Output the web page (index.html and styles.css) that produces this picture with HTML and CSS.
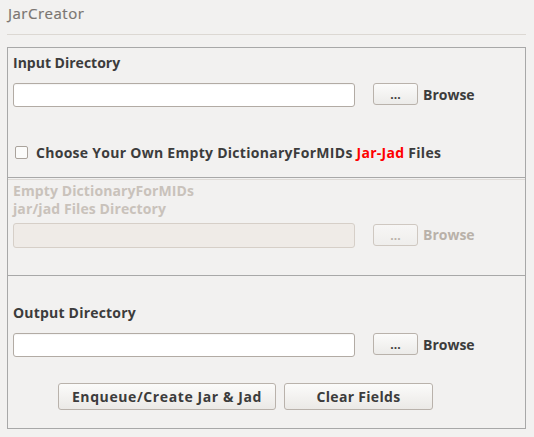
FILE: index.html
```html
<!DOCTYPE html>
<html>
<head>
<meta charset="utf-8">
<link rel="stylesheet" href="styles.css">
</head>
<body>
<div class="app">
  <div class="title">JarCreator</div>
  <div class="sep"></div>
  <div class="panel">
    <section class="sec sec-a">
      <div class="label label-a">Input Directory</div>
      <div class="row">
        <div class="field"></div>
        <div class="dots">...</div>
        <span class="browse">Browse</span>
      </div>
      <div class="check">
        <span class="box"></span>
        <span class="check-text">Choose Your Own Empty DictionaryForMIDs <span class="red">Jar-Jad</span> Files</span>
      </div>
    </section>
    <section class="sec sec-b disabled">
      <div class="label label-b">Empty DictionaryForMIDs<br>jar/jad Files Directory</div>
      <div class="row row-b">
        <div class="field"></div>
        <div class="dots">...</div>
        <span class="browse">Browse</span>
      </div>
    </section>
    <section class="sec sec-c">
      <div class="label label-c">Output Directory</div>
      <div class="row">
        <div class="field"></div>
        <div class="dots">...</div>
        <span class="browse">Browse</span>
      </div>
      <div class="actions">
        <div class="btn btn-enq">Enqueue/Create Jar &amp; Jad</div>
        <div class="btn btn-clear">Clear Fields</div>
      </div>
    </section>
  </div>
</div>
</body>
</html>
```
FILE: styles.css
```css
html, body {
  margin: 0;
  padding: 0;
  background: #f2f1f0;
}
body {
  font-family: "Open Sans", Lato, sans-serif;
  color: #3c3c3c;
  width: 534px;
  height: 437px;
  overflow: hidden;
}
.app {
  padding: 5px 8px 0 7px;
}
.title {
  padding-left: 1px;
  font-size: 15px;
  line-height: 17px;
  letter-spacing: 0.5px;
  color: #7a7571;
  font-weight: 400;
  -webkit-text-stroke: 0.2px #7a7571;
}
.sep {
  margin-top: 12px;
  height: 1px;
  background: #dcd8d3;
  width: 519px;
}
.panel {
  margin-top: 12px;
  width: 519px;
  display: flex;
  flex-direction: column;
}
.sec {
  border: 1px solid #a8a8a8;
  padding: 0 5px;
}
.sec-a {
  height: 129px;
}
.sec-b {
  border-top: none;
  border-bottom: none;
  height: 97px;
}
.sec-b::before {
  content: "";
  display: block;
  height: 1px;
  margin: 1px -5px 0;
  background: #dedad6;
}
.sec-c {
  height: 152px;
  border-top: 1px solid #a8a8a8;
}
.label {
  font-weight: 700;
  font-size: 14px;
  line-height: 18px;
}
.label-a {
  margin-top: 6px;
}
.label-b {
  margin-top: 2px;
  color: #c9c2bb;
  letter-spacing: 0.1px;
}
.label-c {
  margin-top: 28px;
  letter-spacing: 0.2px;
}
.row {
  display: flex;
  align-items: center;
  margin-top: 11px;
  height: 24px;
}
.row-b {
  margin-top: 5px;
  height: 25px;
}
.field {
  width: 340px;
  height: 22px;
  border: 1px solid #b2aba4;
  border-radius: 3px;
  background: #ffffff;
  box-shadow: inset 0 1px 1px rgba(0,0,0,0.04);
}
.row-b .field {
  height: 23px;
}
.dots {
  margin-left: 18px;
  width: 43px;
  height: 20px;
  margin-bottom: 2px;
  border: 1px solid #b9b2ab;
  border-radius: 3px;
  background: linear-gradient(#fbfbfa, #ecebe9);
  font-weight: 700;
  font-size: 12px;
  line-height: 22px;
  text-align: center;
}
.browse {
  margin-left: 5px;
  font-weight: 700;
  font-size: 14px;
  margin-bottom: 2px;
}
.check {
  display: flex;
  align-items: center;
  margin-top: 38px;
  height: 14px;
}
.box {
  width: 11px;
  height: 11px;
  margin-left: 2px;
  border: 1px solid #aaa39c;
  border-radius: 2px;
  background: #fbfbfa;
}
.check-text {
  margin-left: 8px;
  font-weight: 700;
  font-size: 14px;
  letter-spacing: 0.28px;
}
.red {
  color: #ff0000;
}
.disabled .field {
  background: #efebe7;
  border-color: #d6cfc8;
  box-shadow: none;
}
.disabled .dots {
  color: #b9b1a9;
  border-color: #cfc8c1;
  background: linear-gradient(#f7f6f5, #efeeec);
}
.disabled .browse {
  color: #b9b1a9;
}
.actions {
  display: flex;
  gap: 8px;
  margin-top: 26px;
  padding-left: 45px;
}
.btn {
  height: 25px;
  border: 1px solid #b9b2ab;
  border-radius: 3px;
  background: linear-gradient(#fbfbfa, #ebe9e6);
  font-weight: 700;
  font-size: 14px;
  line-height: 25px;
  text-align: center;
}
.btn-enq {
  width: 216px;
  letter-spacing: 0.6px;
}
.btn-clear {
  width: 147px;
  letter-spacing: 0.3px;
}
```
